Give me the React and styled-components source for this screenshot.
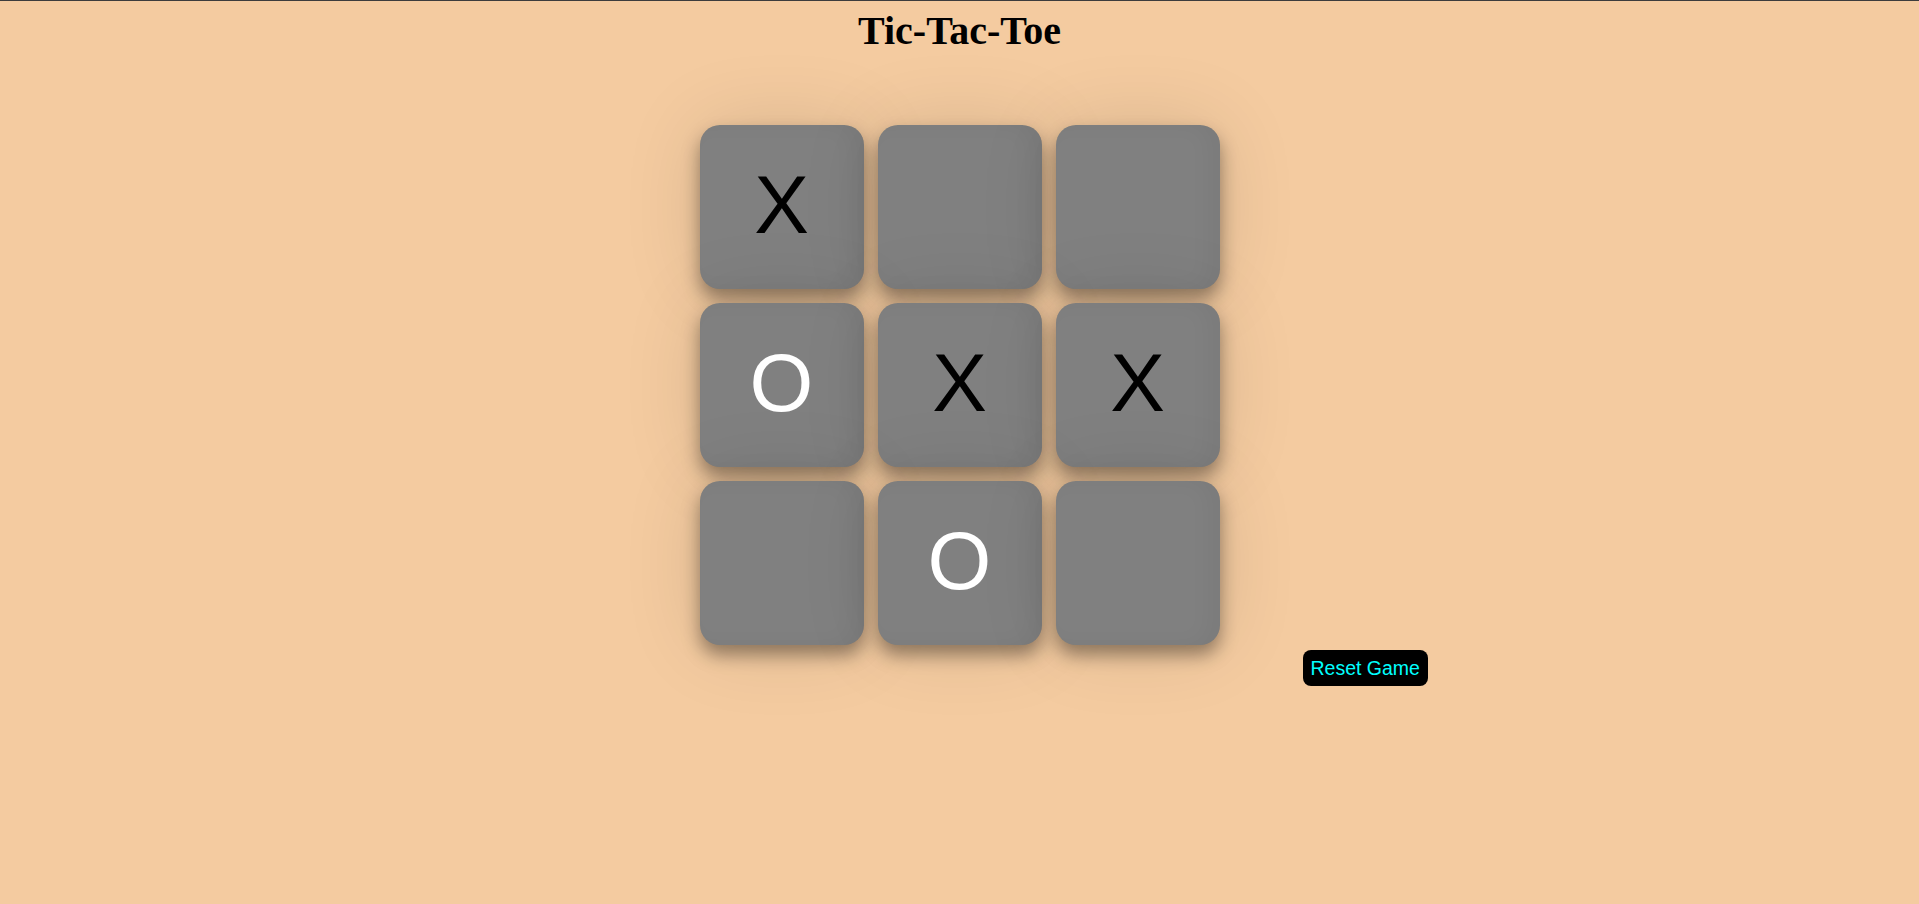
import React, { useState } from "react";
import styled, { createGlobalStyle } from "styled-components";

const GlobalStyle = createGlobalStyle`
  html, body {
    margin: 0;
    padding: 0;
    background: #f4cba0;
  }
  body {
    border-top: 1px solid #3c3c3c;
    min-height: 903px;
    font-family: "Liberation Serif", "Times New Roman", serif;
  }
`;

const Title = styled.h1`
  margin: 6px 0 0;
  text-align: center;
  font-size: 40px;
  font-weight: 700;
  color: #000;
`;

const Layout = styled.main`
  display: grid;
  grid-template-columns: 1fr 520px 1fr;
  margin-top: 71px;
`;

const Board = styled.div`
  grid-column: 2;
  grid-row: 1;
  display: grid;
  grid-template-columns: repeat(3, 164px);
  grid-auto-rows: 164px;
  gap: 14px;
`;

const Cell = styled.button`
  border: none;
  border-radius: 20px;
  background: #808080;
  box-shadow: inset -12px 0 20px rgba(0, 0, 0, 0.04),
    0 10px 18px rgba(0, 0, 0, 0.38), 0 0 80px rgba(0, 0, 0, 0.12);
  font-family: "Liberation Sans", Arial, sans-serif;
  font-size: 82px;
  line-height: 1;
  padding: 0 0 4px;
  color: ${({ $mark }) => ($mark === "O" ? "#ffffff" : "#000000")};
  cursor: pointer;
`;

const Controls = styled.div`
  grid-column: 3;
  grid-row: 2;
  padding: 5px 0 0 83px;
`;

const ResetButton = styled.button`
  background: #000;
  color: #00ffff;
  border: none;
  border-radius: 8px;
  font-family: "Liberation Sans", Arial, sans-serif;
  font-size: 19.5px;
  height: 36px;
  padding: 0 8px;
  cursor: pointer;
`;

const initial = ["X", "", "", "O", "X", "X", "", "O", ""];

export default function App() {
  const [cells, setCells] = useState(initial);

  return (
    <>
      <GlobalStyle />
      <Title>Tic-Tac-Toe</Title>
      <Layout>
        <Board>
          {cells.map((mark, i) => (
            <Cell key={i} $mark={mark}>
              {mark}
            </Cell>
          ))}
        </Board>
        <Controls>
          <ResetButton onClick={() => setCells(Array(9).fill(""))}>
            Reset Game
          </ResetButton>
        </Controls>
      </Layout>
    </>
  );
}
